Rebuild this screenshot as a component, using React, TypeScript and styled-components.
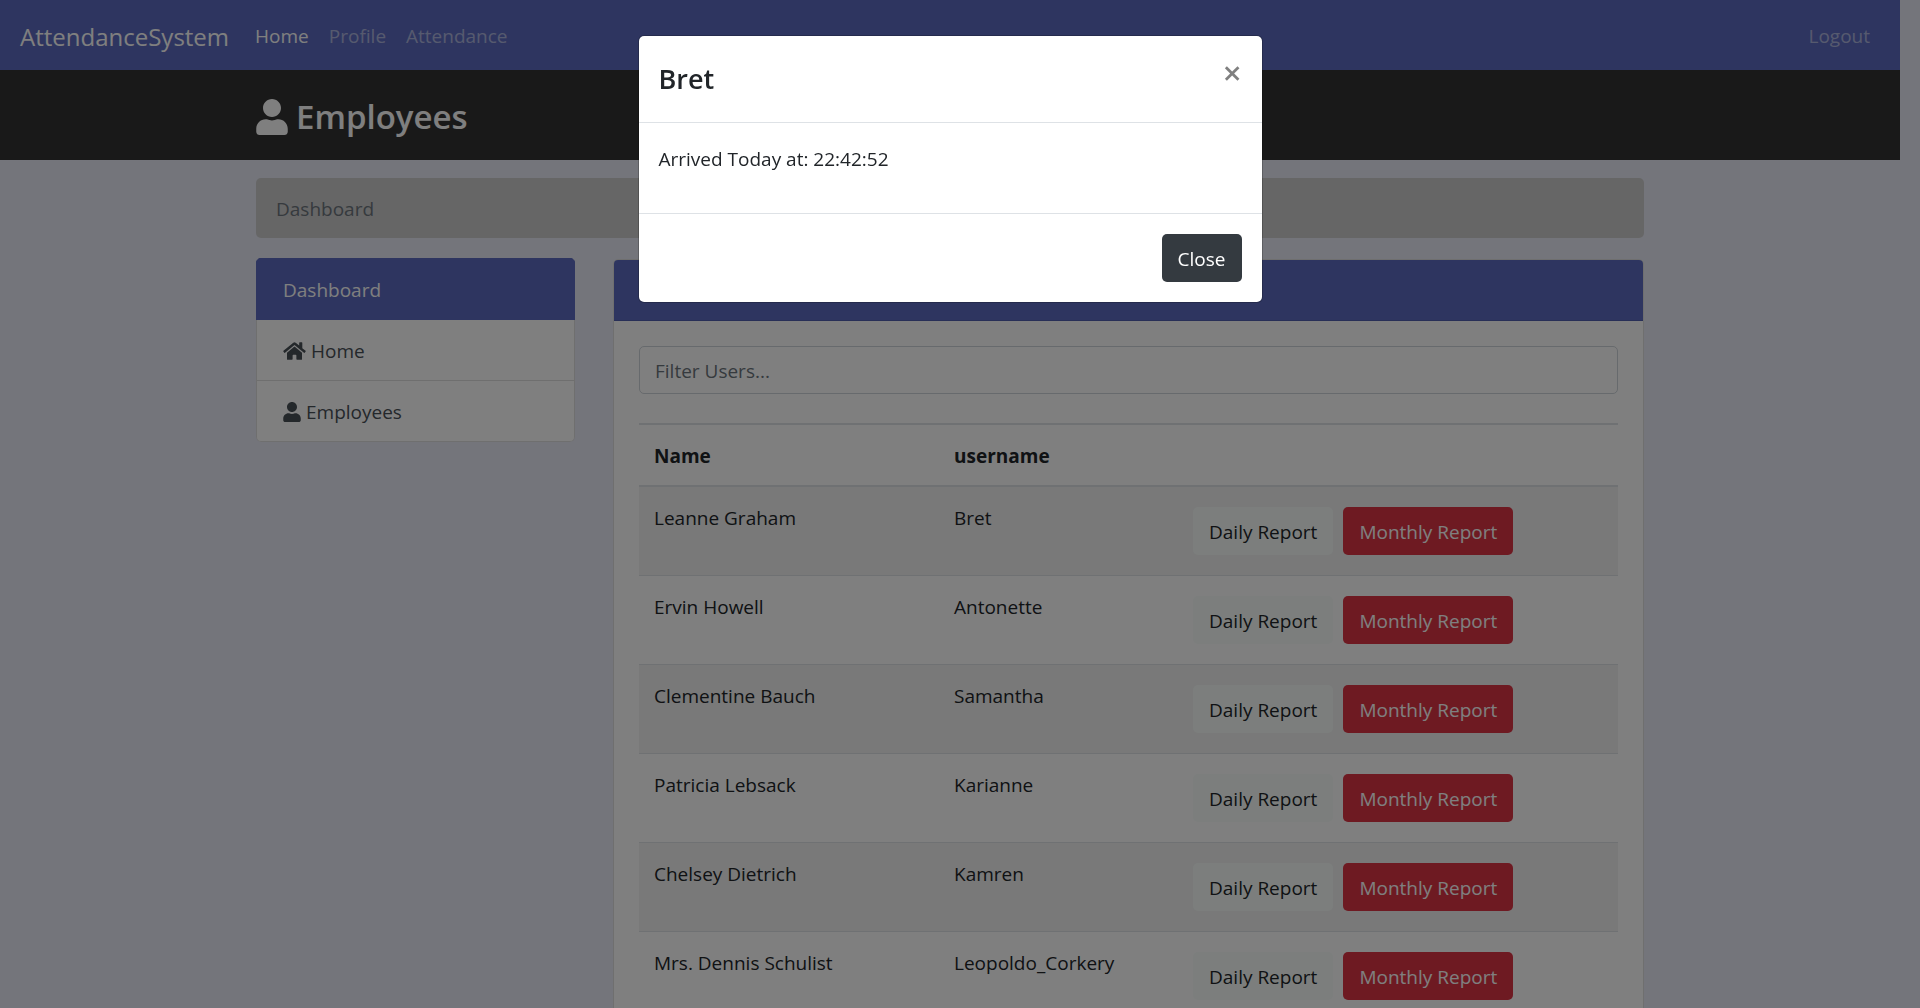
import React from "react";
import styled, { createGlobalStyle } from "styled-components";
import { FaHome, FaUser } from "react-icons/fa";

const indigo = "#5c6bc0";

const GlobalStyle = createGlobalStyle`
  *, *::before, *::after { box-sizing: border-box; }
  html { height: 100%; overflow: hidden; }
  body {
    margin: 0;
    height: 100%;
    overflow: hidden;
    background: #e8eaf6;
    color: #212529;
    font-family: "Segoe UI", "Open Sans", "Noto Sans", sans-serif;
    font-size: 19px;
    line-height: 30px;
  }
  button, input { font: inherit; }
  h1, h2, p { margin: 0; }
`;

/* Keeps room for the scrollbar that is hidden while the dialog is open. */
const Page = styled.div`
  padding-right: 20px;
`;

const Navbar = styled.nav`
  display: flex;
  align-items: center;
  height: 70px;
  padding: 0 20px;
  background: ${indigo};
`;

const Brand = styled.a`
  margin-right: 16px;
  padding-top: 4px;
  color: #fff;
  font-size: 24px;
  text-decoration: none;
`;

const NavList = styled.div`
  display: flex;
  flex: 1;
`;

const NavLink = styled.a<{ $active?: boolean; $end?: boolean }>`
  padding: 12px 10px 10px;
  margin-left: ${(p) => (p.$end ? "auto" : "0")};
  color: ${(p) => (p.$active ? "#fff" : "rgba(255, 255, 255, 0.5)")};
  font-weight: ${(p) => (p.$active ? 500 : 400)};
  text-decoration: none;
`;

const Container = styled.div`
  max-width: 1428px;
  margin: 0 auto;
  padding: 0 20px;
`;

const TitleBar = styled.header`
  background: #333;
  color: #fff;
`;

const Title = styled.h1`
  display: flex;
  align-items: center;
  gap: 8px;
  height: 90px;
  padding-top: 4px;
  font-size: 33px;
  font-weight: 600;
  line-height: 42px;

  svg { width: 32px; height: 36px; }
`;

const Breadcrumb = styled.nav`
  margin: 18px 0 20px;
  padding: 16px 20px 14px;
  border-radius: 5px;
  background: #ccc;
  color: #6c757d;
`;

const Columns = styled.div`
  display: grid;
  grid-template-columns: minmax(0, 319fr) minmax(0, 1031fr);
  align-items: start;
  gap: 38px;
`;

const SideMenu = styled.nav`
  display: flex;
  flex-direction: column;
  border-radius: 5px;
  overflow: hidden;
`;

const SideLink = styled.a<{ $active?: boolean }>`
  display: flex;
  align-items: center;
  gap: 5px;
  padding: 16px 26px 14px;
  border: 1px solid ${(p) => (p.$active ? indigo : "#dfdfdf")};
  border-top-width: ${(p) => (p.$active ? "1px" : "0")};
  background: ${(p) => (p.$active ? indigo : "#fff")};
  color: ${(p) => (p.$active ? "#fff" : "#495057")};
  text-decoration: none;

  &:last-child { border-radius: 0 0 5px 5px; }
`;

const HomeIcon = styled(FaHome)`
  flex: none;
  width: 23px;
  height: 20px;
`;

const UserIcon = styled(FaUser)`
  flex: none;
  width: 18px;
  height: 20px;
`;

const Card = styled.section`
  margin-top: 1px;
  border: 1px solid #dfdfdf;
  border-radius: 5px;
  background: #fff;
`;

const CardHeader = styled.h2`
  padding: 16px 25px 14px;
  border-bottom: 1px solid #515faf;
  border-radius: 4px 4px 0 0;
  background: ${indigo};
  color: #fff;
  font-size: 19px;
  font-weight: 400;
`;

const CardBody = styled.div`
  padding: 25px;
`;

const FilterInput = styled.input`
  display: block;
  width: 100%;
  height: 48px;
  margin-bottom: 29px;
  padding: 9px 15px 7px;
  border: 1px solid #ced4da;
  border-radius: 5px;
  background: #fff;
  color: #495057;

  &::placeholder { color: #6c757d; opacity: 1; }
`;

const Table = styled.table`
  width: 100%;
  table-layout: fixed;
  border-collapse: separate;
  border-spacing: 0;
`;

const HeadCell = styled.th<{ $width?: number }>`
  width: ${(p) => (p.$width ? `${p.$width}px` : "auto")};
  padding: 16px 15px 14px;
  border-top: 2px solid #dee2e6;
  border-bottom: 2px solid #dee2e6;
  text-align: left;
  font-weight: 700;
`;

const Row = styled.tr`
  &:nth-child(odd) { background: rgba(0, 0, 0, 0.05); }
`;

const Cell = styled.td`
  padding: 16px 15px 14px;
  border-bottom: 1px solid #dee2e6;
  vertical-align: top;
`;

const Actions = styled.div`
  display: flex;
  gap: 10px;
  padding: 4px 0 6px;
`;

const Button = styled.button<{ $tone: "light" | "danger" | "dark" }>`
  height: 48px;
  padding: 2px 16px 0;
  border: 0;
  border-radius: 5px;
  background: ${(p) => ({ light: "#f8fdfa", danger: "#dc3545", dark: "#343a40" })[p.$tone]};
  color: ${(p) => (p.$tone === "light" ? "#212529" : "#fff")};
  white-space: nowrap;
`;

const Backdrop = styled.div`
  position: fixed;
  inset: 0;
  padding: 35px 20px 0 0;
  background: rgba(0, 0, 0, 0.5);
`;

const Dialog = styled.div`
  width: 100%;
  max-width: 625px;
  margin: 0 auto;
  border: 1px solid rgba(0, 0, 0, 0.2);
  border-radius: 6px;
  background: #fff;
  background-clip: padding-box;
`;

const DialogHeader = styled.div`
  display: flex;
  justify-content: space-between;
  align-items: flex-start;
  padding: 20px;
  border-bottom: 1px solid #dee2e6;
`;

const DialogTitle = styled.h2`
  font-size: 27px;
  font-weight: 600;
  line-height: 46px;
`;

const DismissButton = styled.button`
  padding: 0;
  border: 0;
  background: transparent;
  color: rgba(0, 0, 0, 0.5);
  font-size: 33px;
  font-weight: 600;
  line-height: 34px;
`;

const DialogBody = styled.div`
  padding: 21px 20px 39px;
`;

const DialogFooter = styled.div`
  display: flex;
  justify-content: flex-end;
  padding: 20px;
  border-top: 1px solid #dee2e6;
`;

const employees = [
  { name: "Leanne Graham", username: "Bret" },
  { name: "Ervin Howell", username: "Antonette" },
  { name: "Clementine Bauch", username: "Samantha" },
  { name: "Patricia Lebsack", username: "Karianne" },
  { name: "Chelsey Dietrich", username: "Kamren" },
  { name: "Mrs. Dennis Schulist", username: "Leopoldo_Corkery" },
];

export default function App() {
  return (
    <>
      <GlobalStyle />
      <Page>
        <Navbar>
          <Brand href="#">AttendanceSystem</Brand>
          <NavList>
            <NavLink href="#" $active>Home</NavLink>
            <NavLink href="#">Profile</NavLink>
            <NavLink href="#">Attendance</NavLink>
            <NavLink href="#" $end>Logout</NavLink>
          </NavList>
        </Navbar>
        <TitleBar>
          <Container>
            <Title><FaUser />Employees</Title>
          </Container>
        </TitleBar>
        <Container as="main">
          <Breadcrumb>Dashboard</Breadcrumb>
          <Columns>
            <SideMenu>
              <SideLink href="#" $active>Dashboard</SideLink>
              <SideLink href="#"><HomeIcon />Home</SideLink>
              <SideLink href="#"><UserIcon />Employees</SideLink>
            </SideMenu>
            <Card>
              <CardHeader>Employees</CardHeader>
              <CardBody>
                <FilterInput type="text" placeholder="Filter Users..." aria-label="Filter users" />
                <Table>
                  <thead>
                    <tr>
                      <HeadCell $width={300}>Name</HeadCell>
                      <HeadCell $width={239}>username</HeadCell>
                      <HeadCell />
                    </tr>
                  </thead>
                  <tbody>
                    {employees.map((e) => (
                      <Row key={e.username}>
                        <Cell>{e.name}</Cell>
                        <Cell>{e.username}</Cell>
                        <Cell>
                          <Actions>
                            <Button $tone="light">Daily Report</Button>
                            <Button $tone="danger">Monthly Report</Button>
                          </Actions>
                        </Cell>
                      </Row>
                    ))}
                  </tbody>
                </Table>
              </CardBody>
            </Card>
          </Columns>
        </Container>
      </Page>
      <Backdrop>
        <Dialog role="dialog" aria-modal="true" aria-labelledby="dialog-title">
          <DialogHeader>
            <DialogTitle id="dialog-title">Bret</DialogTitle>
            <DismissButton aria-label="Close dialog">×</DismissButton>
          </DialogHeader>
          <DialogBody>
            <p>Arrived Today at: 22:42:52</p>
          </DialogBody>
          <DialogFooter>
            <Button $tone="dark">Close</Button>
          </DialogFooter>
        </Dialog>
      </Backdrop>
    </>
  );
}
